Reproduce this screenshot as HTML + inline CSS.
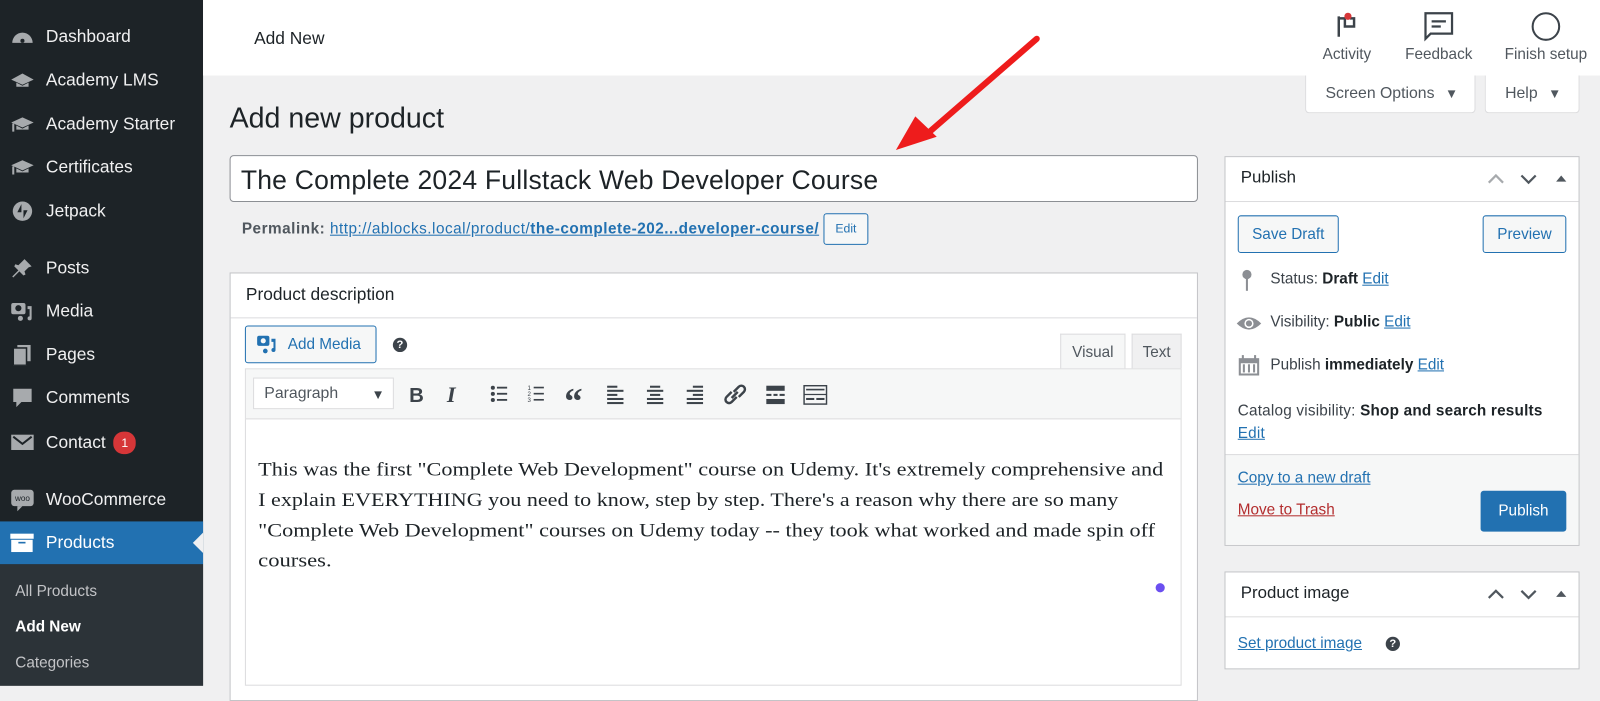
<!DOCTYPE html>
<html><head><meta charset="utf-8">
<style>
*{box-sizing:border-box;margin:0;padding:0}
html,body{width:1600px;height:686px;overflow:hidden;background:#f0f0f1}
#w{position:absolute;left:0;top:0;width:1568px;height:672px;transform:scale(1.0204);transform-origin:0 0;font-family:"Liberation Sans",sans-serif;color:#3c434a}
.a{position:absolute}
#sb{left:0;top:0;width:199px;height:672px;background:#1d2327}
.mi{position:absolute;left:45px;font-size:17px;color:#f0f0f1;line-height:20px}
.ic{position:absolute;left:10px;width:24px;height:20px}
.sub{position:absolute;left:15px;font-size:15px;color:#c3c4c7}
#top{left:199px;top:0;width:1369px;height:74px;background:#fff}
.tl{position:absolute;font-size:15px;color:#50575e;text-align:center}
.box{position:absolute;background:#fff;border:1px solid #c3c4c7}
.btn{position:absolute;border:1px solid #2271b1;border-radius:3px;color:#2271b1;background:#f6f7f7;font-size:15px;text-align:center}
a,.lk{color:#2271b1;text-decoration:underline}
</style></head><body><div id="w">

<div id="sb" class="a">
 <svg class="ic" style="top:26px" viewBox="0 0 24 20"><path d="M2 16a10 10 0 0 1 20 0z" fill="#a7aaad"/><circle cx="12" cy="14" r="2" fill="#1d2327"/></svg>
 <div class="mi" style="top:26px">Dashboard</div>
 <svg class="ic" style="top:69px" viewBox="0 0 24 20"><path d="M12 3L23 9 12 14 1 9z M6 12v4h12v-4l-6 3z" fill="#a7aaad"/></svg>
 <div class="mi" style="top:69px">Academy LMS</div>
 <svg class="ic" style="top:112px" viewBox="0 0 24 20"><path d="M12 3L23 8 12 13 1 8z M6 11v4h12v-4l-6 3z M2 9v8h2V9z" fill="#a7aaad"/></svg>
 <div class="mi" style="top:112px">Academy Starter</div>
 <svg class="ic" style="top:154px" viewBox="0 0 24 20"><path d="M12 3L23 8 12 13 1 8z M6 11v4h12v-4l-6 3z M2 9v8h2V9z" fill="#a7aaad"/></svg>
 <div class="mi" style="top:154px">Certificates</div>
 <svg class="ic" style="top:197px" viewBox="0 0 24 20"><circle cx="12" cy="10" r="9.5" fill="#a7aaad"/><path d="M11 3v8H7zM13 17V9h4z" fill="#1d2327"/></svg>
 <div class="mi" style="top:197px">Jetpack</div>
 <svg class="ic" style="top:253px" viewBox="0 0 24 20"><path d="M14 1l7 7-3 1-4 4 1 3-2 1-4-4-6 6-1-1 6-6-4-4 1-2 3 1 4-4z" fill="#a7aaad"/></svg>
 <div class="mi" style="top:253px">Posts</div>
 <svg class="ic" style="top:295px" viewBox="0 0 24 20"><rect x="1" y="2" width="14" height="11" rx="2" fill="#a7aaad"/><circle cx="8" cy="7" r="3" fill="#1d2327"/><path d="M17 5h4v12a2 2 0 1 1-2-2V8h-2z" fill="#a7aaad"/><circle cx="10" cy="17" r="2.5" fill="#a7aaad"/></svg>
 <div class="mi" style="top:295px">Media</div>
 <svg class="ic" style="top:338px" viewBox="0 0 24 20"><rect x="7" y="0" width="13" height="16" fill="#a7aaad"/><rect x="3" y="3" width="13" height="17" fill="#a7aaad" stroke="#1d2327" stroke-width="1.5"/></svg>
 <div class="mi" style="top:338px">Pages</div>
 <svg class="ic" style="top:380px" viewBox="0 0 24 20"><path d="M3 1h18v13H11l-5 5v-5H3z" fill="#a7aaad"/></svg>
 <div class="mi" style="top:380px">Comments</div>
 <svg class="ic" style="top:423px" viewBox="0 0 24 20"><rect x="1" y="3" width="22" height="15" fill="#a7aaad"/><path d="M3 5l9 7 9-7" stroke="#1d2327" stroke-width="2" fill="none"/></svg>
 <div class="mi" style="top:423px">Contact <span style="display:inline-block;background:#d63638;color:#fff;border-radius:10px;font-size:12px;width:22px;height:22px;line-height:22px;text-align:center;vertical-align:1px;margin-left:3px">1</span></div>
 <svg class="ic" style="top:478px;height:24px" viewBox="0 0 24 24"><rect x="1" y="2" width="22" height="16" rx="3" fill="#a7aaad"/><path d="M7 18v5l5-5z" fill="#a7aaad"/><text x="12" y="13" font-size="8" text-anchor="middle" fill="#1d2327" font-family="Liberation Sans">woo</text></svg>
 <div class="mi" style="top:480px">WooCommerce</div>
 <div class="a" style="left:0;top:511px;width:199px;height:42px;background:#2271b1"></div>
 <svg class="ic" style="top:522px" viewBox="0 0 24 20"><rect x="0" y="1" width="23" height="5" fill="#fff"/><rect x="1" y="7" width="21" height="12" fill="#fff"/><rect x="8" y="9" width="7" height="1.6" fill="#2271b1"/></svg>
 <div class="mi" style="top:522px;color:#fff">Products</div>
 <div class="a" style="left:189px;top:522px;width:0;height:0;border-top:10px solid transparent;border-bottom:10px solid transparent;border-right:10px solid #f0f0f1"></div>
 <div class="a" style="left:0;top:553px;width:199px;height:119px;background:#2c3338"></div>
 <div class="sub" style="top:571px">All Products</div>
 <div class="sub" style="top:606px;color:#fff;font-weight:bold">Add New</div>
 <div class="sub" style="top:641px">Categories</div>
</div>

<div id="top" class="a">
 <div class="a" style="left:50px;top:28px;font-size:17px;color:#1d2327">Add New</div>
 <svg class="a" style="left:1110px;top:12px" width="22" height="26" viewBox="0 0 22 26"><path d="M3 4v20M3 6h6v8h9V6h-4" stroke="#3c434a" stroke-width="2.4" fill="none"/><circle cx="12" cy="4" r="3.5" fill="#d63638"/></svg>
 <div class="tl" style="left:1090px;top:45px;width:62px">Activity</div>
 <svg class="a" style="left:1196px;top:11px" width="30" height="30" viewBox="0 0 30 30"><path d="M2 2h26v20H7l-5 5z" stroke="#3c434a" stroke-width="2.2" fill="none"/><path d="M8 10h14M8 15h9" stroke="#3c434a" stroke-width="2.2"/></svg>
 <div class="tl" style="left:1170px;top:45px;width:82px">Feedback</div>
 <svg class="a" style="left:1301px;top:11px" width="30" height="30" viewBox="0 0 30 30"><circle cx="15" cy="15" r="13" stroke="#3c434a" stroke-width="2" fill="none"/></svg>
 <div class="tl" style="left:1268px;top:45px;width:96px">Finish setup</div>
</div>

<div class="a" style="left:1279px;top:74px;width:167px;height:37px;background:#fff;border:1px solid #dcdcde;border-top:none;border-radius:0 0 4px 4px;font-size:15.5px;color:#50575e;padding:9px 0 0 19px">Screen Options <span style="font-size:13px;margin-left:6px">▼</span></div>
<div class="a" style="left:1455px;top:74px;width:93px;height:37px;background:#fff;border:1px solid #dcdcde;border-top:none;border-radius:0 0 4px 4px;font-size:15.5px;color:#50575e;padding:9px 0 0 19px">Help <span style="font-size:13px;margin-left:6px">▼</span></div>

<div class="a" style="left:225px;top:100px;font-size:28px;color:#1d2327">Add new product</div>
<div class="a" style="left:225px;top:152px;width:949px;height:46px;background:#fff;border:1px solid #8c8f94;border-radius:4px;font-size:26px;letter-spacing:0.2px;color:#1d2327;padding:8px 0 0 10px">The Complete 2024 Fullstack Web Developer Course</div>
<div class="a" style="left:237px;top:216px;font-size:15px;letter-spacing:0.5px;color:#50575e;white-space:nowrap"><b>Permalink:</b> <span class="lk">http://ablocks.local/product/<b>the-complete-202...developer-course/</b></span></div>
<div class="btn" style="left:807px;top:209px;width:44px;height:31px;font-size:12px;line-height:29px">Edit</div>

<div class="box" style="left:225px;top:267px;width:949px;height:420px"></div>
<div class="a" style="left:226px;top:311px;width:947px;height:1px;background:#dcdcde"></div>
<div class="a" style="left:241px;top:279px;font-size:17px;color:#1d2327">Product description</div>
<div class="btn" style="left:240px;top:319px;width:129px;height:37px;padding-top:9px;padding-left:41px;text-align:left">Add Media</div>
<svg class="a" style="left:251px;top:328px" width="24" height="20" viewBox="0 0 24 20"><rect x="1" y="1" width="12" height="10" rx="2" fill="#2271b1"/><circle cx="7" cy="6" r="2.5" fill="#f6f7f7"/><path d="M15 4h4v11a2 2 0 1 1-2-2V7h-2z" fill="#2271b1"/><circle cx="9" cy="16" r="2.3" fill="#2271b1"/></svg>
<div class="a" style="left:385px;top:331px;width:14px;height:14px;border-radius:7px;background:#3c434a;color:#fff;font-size:11px;font-weight:bold;text-align:center;line-height:14px">?</div>
<div class="a" style="left:1039px;top:327px;width:64px;height:35px;background:#f6f7f7;border:1px solid #dcdcde;border-bottom:none;font-size:15px;color:#50575e;text-align:center;padding-top:9px">Visual</div>
<div class="a" style="left:1109px;top:327px;width:49px;height:34px;background:#f0f0f1;border:1px solid #dcdcde;border-bottom:none;font-size:15px;color:#50575e;text-align:center;padding-top:9px">Text</div>
<div class="a" style="left:240px;top:361px;width:918px;height:311px;border:1px solid #dcdcde;background:#fff"></div>
<div class="a" style="left:241px;top:362px;width:916px;height:49px;background:#f6f7f7;border-bottom:1px solid #dcdcde"></div>
<div class="a" style="left:248px;top:370px;width:138px;height:31px;background:#fff;border:1px solid #dcdcde;font-size:15.5px;color:#50575e;padding:6px 0 0 10px">Paragraph<span style="position:absolute;right:8px;top:8px;font-size:13px;color:#3c434a">▼</span></div>
<svg class="a" style="left:396px;top:372px" width="430" height="30" viewBox="0 0 430 30" fill="#3c434a">
 <text x="5" y="22" font-size="20" font-weight="bold" font-family="Liberation Sans">B</text>
 <text x="42" y="22" font-size="22" font-style="italic" font-weight="bold" font-family="Liberation Serif">I</text>
 <g><circle cx="87" cy="8" r="2"/><circle cx="87" cy="14" r="2"/><circle cx="87" cy="20" r="2"/><rect x="91" y="7" width="10" height="1.8"/><rect x="91" y="13" width="10" height="1.8"/><rect x="91" y="19" width="10" height="1.8"/></g>
 <g><text x="121" y="10" font-size="6">1</text><text x="121" y="16" font-size="6">2</text><text x="121" y="22" font-size="6">3</text><rect x="127" y="7" width="10" height="1.6"/><rect x="127" y="13" width="10" height="1.6"/><rect x="127" y="19" width="10" height="1.6"/></g>
 <text x="157" y="33" font-size="36" font-weight="bold" font-family="Liberation Serif">“</text>
 <g><rect x="199" y="6" width="10" height="2"/><rect x="199" y="10" width="16" height="2"/><rect x="199" y="14" width="10" height="2"/><rect x="199" y="18" width="16" height="2"/><rect x="199" y="22" width="16" height="2"/></g>
 <g><rect x="241" y="6" width="10" height="2"/><rect x="238" y="10" width="16" height="2"/><rect x="241" y="14" width="10" height="2"/><rect x="238" y="18" width="16" height="2"/><rect x="238" y="22" width="16" height="2"/></g>
 <g><rect x="283" y="6" width="10" height="2"/><rect x="277" y="10" width="16" height="2"/><rect x="283" y="14" width="10" height="2"/><rect x="277" y="18" width="16" height="2"/><rect x="277" y="22" width="16" height="2"/></g>
 <path d="M321 12l-5 5a3.5 3.5 0 0 0 5 5l5-5M328 17l5-5a3.5 3.5 0 0 0-5-5l-5 5M321 18l6-6" stroke="#3c434a" stroke-width="2.4" fill="none"/>
 <g><rect x="355" y="6" width="18" height="5"/><rect x="355" y="14" width="5" height="2"/><rect x="362" y="14" width="4" height="2"/><rect x="368" y="14" width="5" height="2"/><rect x="355" y="19" width="18" height="5"/></g>
 <g><rect x="392" y="6" width="22" height="18" fill="none" stroke="#3c434a" stroke-width="1.4"/><rect x="394" y="9" width="18" height="1.6"/><rect x="392" y="14" width="22" height="1.2"/><rect x="394" y="18" width="8" height="2"/><rect x="404" y="18" width="8" height="2"/></g>
</svg>
<svg class="a" style="left:0;top:0" width="1568" height="672">
 <g font-family="Liberation Serif" font-size="19" fill="#1d2327">
  <text x="253" y="466" textLength="887" lengthAdjust="spacingAndGlyphs">This was the first "Complete Web Development" course on Udemy. It's extremely comprehensive and</text>
  <text x="253" y="496" textLength="843" lengthAdjust="spacingAndGlyphs">I explain EVERYTHING you need to know, step by step. There's a reason why there are so many</text>
  <text x="253" y="526" textLength="879" lengthAdjust="spacingAndGlyphs">"Complete Web Development" courses on Udemy today -- they took what worked and made spin off</text>
  <text x="253" y="555" textLength="72" lengthAdjust="spacingAndGlyphs">courses.</text>
 </g>
 <circle cx="1137" cy="576" r="4.5" fill="#6b4ff0"/>
 <path d="M1016 38L910 130" stroke="#ee1c1c" stroke-width="6" stroke-linecap="round"/>
 <path d="M878 147L897 114L918 134z" fill="#ee1c1c"/>
</svg>

<div class="box" style="left:1200px;top:153px;width:348px;height:382px"></div>
<div class="a" style="left:1201px;top:197px;width:346px;height:1px;background:#dcdcde"></div>
<div class="a" style="left:1216px;top:165px;font-size:16.5px;color:#1d2327">Publish</div>
<svg class="a" style="left:1456px;top:166px" width="84" height="18" viewBox="0 0 84 18"><path d="M3 13l7-7 7 7" stroke="#a7aaad" stroke-width="2.2" fill="none"/><path d="M35 6l7 7 7-7" stroke="#50575e" stroke-width="2.2" fill="none"/><path d="M69 12l5-6 5 6z" fill="#50575e"/></svg>
<div class="btn" style="left:1213px;top:211px;width:99px;height:37px;padding-top:9px">Save Draft</div>
<div class="btn" style="left:1453px;top:211px;width:82px;height:37px;padding-top:9px">Preview</div>
<svg class="a" style="left:1215px;top:264px" width="14" height="22" viewBox="0 0 14 22"><circle cx="7" cy="5" r="4.5" fill="#8c8f94"/><rect x="6" y="8" width="2" height="13" fill="#8c8f94"/></svg>
<div class="a" style="left:1245px;top:265px;font-size:15px">Status: <b style="color:#1d2327">Draft</b> <span class="lk">Edit</span></div>
<svg class="a" style="left:1211px;top:309px" width="26" height="16" viewBox="0 0 26 16"><path d="M1 8Q13-4 25 8Q13 20 1 8z" fill="#8c8f94"/><circle cx="13" cy="8" r="4.5" fill="#fff"/><circle cx="13" cy="8" r="3" fill="#8c8f94"/></svg>
<div class="a" style="left:1245px;top:307px;font-size:15px">Visibility: <b style="color:#1d2327">Public</b> <span class="lk">Edit</span></div>
<svg class="a" style="left:1213px;top:347px" width="22" height="22" viewBox="0 0 22 22"><rect x="1" y="4" width="20" height="17" fill="#8c8f94"/><rect x="3" y="9" width="16" height="10" fill="#fff"/><rect x="5" y="10" width="2" height="8" fill="#8c8f94"/><rect x="10" y="10" width="2" height="8" fill="#8c8f94"/><rect x="15" y="10" width="2" height="8" fill="#8c8f94"/><rect x="4" y="1" width="2" height="5" fill="#8c8f94"/><rect x="16" y="1" width="2" height="5" fill="#8c8f94"/></svg>
<div class="a" style="left:1245px;top:349px;font-size:15px">Publish <b style="color:#1d2327">immediately</b> <span class="lk">Edit</span></div>
<div class="a" style="left:1213px;top:392px;font-size:15px;letter-spacing:0.2px;line-height:22px;width:330px">Catalog visibility: <b style="color:#1d2327">Shop and search results</b><br><span class="lk">Edit</span></div>
<div class="a" style="left:1201px;top:445px;width:346px;height:89px;background:#f6f7f7;border-top:1px solid #dcdcde"></div>
<div class="a lk" style="left:1213px;top:460px;font-size:15px">Copy to a new draft</div>
<div class="a" style="left:1213px;top:491px;font-size:15px;color:#b32d2e;text-decoration:underline">Move to Trash</div>
<div class="a" style="left:1451px;top:481px;width:84px;height:40px;background:#2271b1;border-radius:3px;color:#fff;font-size:15px;text-align:center;padding-top:11px">Publish</div>

<div class="box" style="left:1200px;top:560px;width:348px;height:96px"></div>
<div class="a" style="left:1201px;top:604px;width:346px;height:1px;background:#dcdcde"></div>
<div class="a" style="left:1216px;top:572px;font-size:16.5px;color:#1d2327">Product image</div>
<svg class="a" style="left:1456px;top:573px" width="84" height="18" viewBox="0 0 84 18"><path d="M3 13l7-7 7 7" stroke="#50575e" stroke-width="2.2" fill="none"/><path d="M35 6l7 7 7-7" stroke="#50575e" stroke-width="2.2" fill="none"/><path d="M69 12l5-6 5 6z" fill="#50575e"/></svg>
<div class="a lk" style="left:1213px;top:622px;font-size:15px">Set product image</div>
<div class="a" style="left:1358px;top:624px;width:14px;height:14px;border-radius:7px;background:#3c434a;color:#fff;font-size:11px;font-weight:bold;text-align:center;line-height:14px">?</div>

</div></body></html>
